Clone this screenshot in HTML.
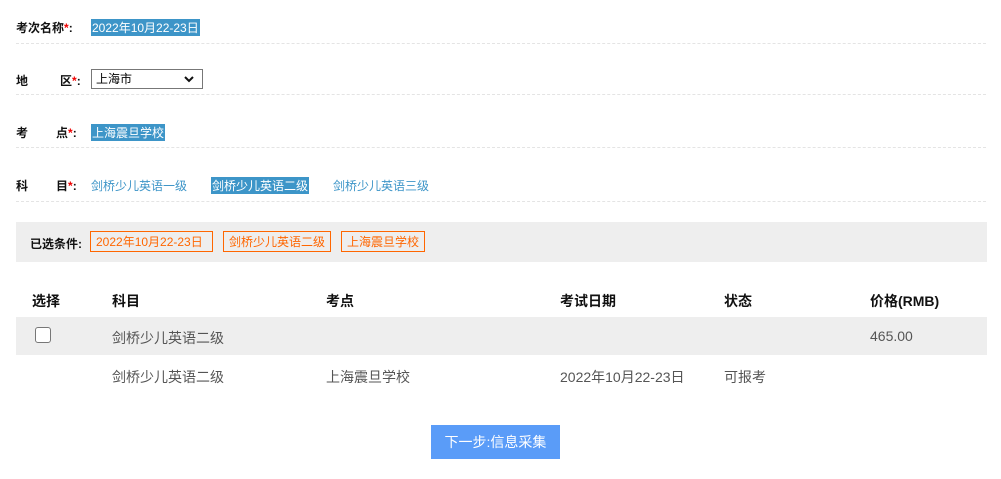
<!DOCTYPE html>
<html><head><meta charset="utf-8"><style>
body{margin:0;width:1001px;height:479px;background:#fff;font-family:"Liberation Sans","Noto Sans CJK SC",sans-serif;position:relative;overflow:hidden}
.a{position:absolute;white-space:nowrap}
.lbl{font-size:12px;font-weight:bold;color:#111}
.st{color:#e00}
.line{position:absolute;left:16px;width:970px;border-top:1px dashed #e4e4e4}
.sel{background:#3d95c8;color:#fff;font-size:12px;padding:0 1px}
.lk{color:#3d95c8;font-size:12px}
.tag{position:absolute;top:231px;height:21px;border:1px solid #f60;color:#f60;font-size:12px;line-height:21px;padding:0 5px;box-sizing:border-box;white-space:nowrap}
.th{font-size:14px;font-weight:bold;color:#111}
.td{font-size:14px;color:#555}
</style></head><body>
<div class="a lbl" style="left:16px;top:19px">考次名称<span class="st">*</span>:</div>
<div class="a sel" style="left:91px;top:19px">2022年10月22-23日</div>
<div class="line" style="top:43px"></div>

<div class="a lbl" style="left:16px;top:72px">地</div>
<div class="a lbl" style="left:60px;top:72px">区<span class="st">*</span>:</div>
<div class="a" style="left:91px;top:69px;width:110px;height:18px;border:1px solid #777;font-size:12px;line-height:18px;box-sizing:content-box"><span style="margin-left:4px">上海市</span><svg style="position:absolute;right:8px;top:6px" width="10" height="7" viewBox="0 0 10 7"><path d="M1 1l4 4 4-4" stroke="#111" stroke-width="2" fill="none"/></svg></div>
<div class="line" style="top:94px"></div>

<div class="a lbl" style="left:16px;top:124px">考</div>
<div class="a lbl" style="left:56px;top:124px">点<span class="st">*</span>:</div>
<div class="a sel" style="left:91px;top:124px">上海震旦学校</div>
<div class="line" style="top:147px"></div>

<div class="a lbl" style="left:16px;top:177px">科</div>
<div class="a lbl" style="left:56px;top:177px">目<span class="st">*</span>:</div>
<div class="a lk" style="left:91px;top:177px">剑桥少儿英语一级</div>
<div class="a sel" style="left:211px;top:177px">剑桥少儿英语二级</div>
<div class="a lk" style="left:333px;top:177px">剑桥少儿英语三级</div>
<div class="line" style="top:201px"></div>

<div class="a" style="left:16px;top:222px;width:971px;height:40px;background:#eee"></div>
<div class="a lbl" style="left:30px;top:235px">已选条件:</div>
<div class="tag" style="left:90px;width:123px">2022年10月22-23日</div>
<div class="tag" style="left:223px;width:108px">剑桥少儿英语二级</div>
<div class="tag" style="left:341px;width:84px">上海震旦学校</div>

<div class="a th" style="left:32px;top:291px">选择</div>
<div class="a th" style="left:112px;top:291px">科目</div>
<div class="a th" style="left:326px;top:291px">考点</div>
<div class="a th" style="left:560px;top:291px">考试日期</div>
<div class="a th" style="left:724px;top:291px">状态</div>
<div class="a th" style="left:870px;top:291px">价格(RMB)</div>

<div class="a" style="left:16px;top:317px;width:971px;height:38px;background:#eee"></div>
<div class="a" style="left:35px;top:327px;width:14px;height:14px;border:1px solid #777;border-radius:3px;background:#fff"></div>
<div class="a td" style="left:112px;top:328px">剑桥少儿英语二级</div>
<div class="a td" style="left:870px;top:328px">465.00</div>

<div class="a td" style="left:112px;top:367px">剑桥少儿英语二级</div>
<div class="a td" style="left:326px;top:367px">上海震旦学校</div>
<div class="a td" style="left:560px;top:367px">2022年10月22-23日</div>
<div class="a td" style="left:724px;top:367px">可报考</div>

<div class="a" style="left:431px;top:425px;width:129px;height:34px;background:#5a9cf8;color:#fff;font-size:14px;line-height:34px;text-align:center">下一步:信息采集</div>
</body></html>
